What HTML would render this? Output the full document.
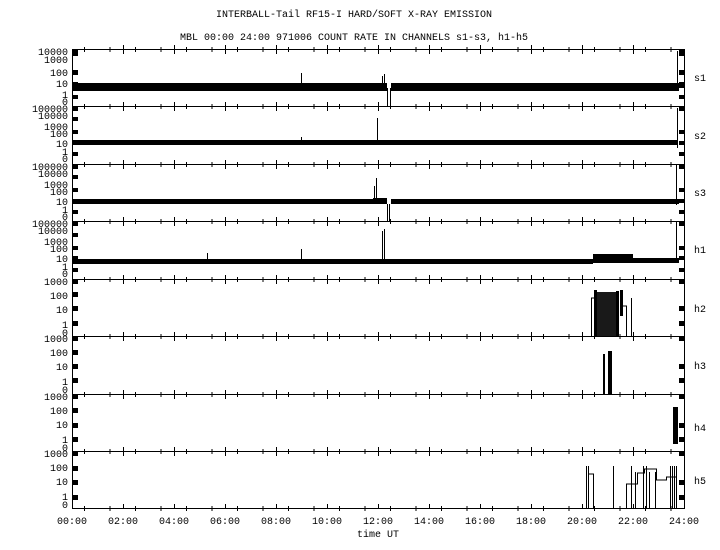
<!DOCTYPE html>
<html><head><meta charset="utf-8"><style>
html,body{margin:0;padding:0;background:#fff;}
svg{display:block;font-family:"Liberation Mono","DejaVu Sans Mono",monospace;font-size:10px;}
</style></head><body>
<svg width="720" height="550" viewBox="0 0 720 550" xmlns="http://www.w3.org/2000/svg">
<rect width="720" height="550" fill="#fff"/>
<text x="354" y="17" text-anchor="middle">INTERBALL-Tail RF15-I HARD/SOFT X-RAY EMISSION</text>
<text x="354" y="40" text-anchor="middle">MBL 00:00 24:00 971006  COUNT RATE IN CHANNELS s1-s3, h1-h5</text>
<g stroke="#000" fill="none" stroke-width="1">
<rect x="72.5" y="49.5" width="612" height="459"/>
<line x1="72" y1="106.5" x2="685" y2="106.5"/>
<line x1="72" y1="164.5" x2="685" y2="164.5"/>
<line x1="72" y1="221.5" x2="685" y2="221.5"/>
<line x1="72" y1="279.5" x2="685" y2="279.5"/>
<line x1="72" y1="336.5" x2="685" y2="336.5"/>
<line x1="72" y1="394.5" x2="685" y2="394.5"/>
<line x1="72" y1="451.5" x2="685" y2="451.5"/>
</g>
<g stroke="#000" stroke-width="1">
<path d="M123.5 45v9M174.5 45v9M225.5 45v9M276.5 45v9M327.5 45v9M378.5 45v9M429.5 45v9M480.5 45v9M531.5 45v9M582.5 45v9M633.5 45v9
M123.5 102v9M174.5 102v9M225.5 102v9M276.5 102v9M327.5 102v9M378.5 102v9M429.5 102v9M480.5 102v9M531.5 102v9M582.5 102v9M633.5 102v9
M123.5 160v9M174.5 160v9M225.5 160v9M276.5 160v9M327.5 160v9M378.5 160v9M429.5 160v9M480.5 160v9M531.5 160v9M582.5 160v9M633.5 160v9
M123.5 217v9M174.5 217v9M225.5 217v9M276.5 217v9M327.5 217v9M378.5 217v9M429.5 217v9M480.5 217v9M531.5 217v9M582.5 217v9M633.5 217v9
M123.5 275v9M174.5 275v9M225.5 275v9M276.5 275v9M327.5 275v9M378.5 275v9M429.5 275v9M480.5 275v9M531.5 275v9M582.5 275v9M633.5 275v9
M123.5 332v9M174.5 332v9M225.5 332v9M276.5 332v9M327.5 332v9M378.5 332v9M429.5 332v9M480.5 332v9M531.5 332v9M582.5 332v9M633.5 332v9
M123.5 390v9M174.5 390v9M225.5 390v9M276.5 390v9M327.5 390v9M378.5 390v9M429.5 390v9M480.5 390v9M531.5 390v9M582.5 390v9M633.5 390v9
M123.5 447v9M174.5 447v9M225.5 447v9M276.5 447v9M327.5 447v9M378.5 447v9M429.5 447v9M480.5 447v9M531.5 447v9M582.5 447v9M633.5 447v9
M123.5 504v5M174.5 504v5M225.5 504v5M276.5 504v5M327.5 504v5M378.5 504v5M429.5 504v5M480.5 504v5M531.5 504v5M582.5 504v5M633.5 504v5"/>
</g>
<g stroke="#000" stroke-dasharray="1 24.5">
<path d="M72 49.5h612M72 106.5h612M72 164.5h612M72 221.5h612M72 279.5h612M72 336.5h612M72 394.5h612M72 451.5h612M72 508.5h612" stroke-width="5" stroke-dashoffset="-12"/>
</g>
<g fill="#000">
<rect x="73" y="50" width="5" height="6"/><rect x="73" y="70" width="5" height="5"/><rect x="73" y="82" width="5" height="6"/><rect x="73" y="95" width="5" height="4"/>
<rect x="73" y="107" width="5" height="4"/><rect x="73" y="117" width="5" height="4"/><rect x="73" y="130" width="5" height="4"/><rect x="73" y="141" width="5" height="4"/><rect x="73" y="152" width="5" height="4"/>
<rect x="73" y="165" width="5" height="4"/><rect x="73" y="175" width="5" height="4"/><rect x="73" y="188" width="5" height="4"/><rect x="73" y="199" width="5" height="4"/><rect x="73" y="210" width="5" height="4"/>
<rect x="73" y="222" width="5" height="4"/><rect x="73" y="233" width="5" height="4"/><rect x="73" y="246" width="5" height="4"/><rect x="73" y="256" width="5" height="4"/><rect x="73" y="268" width="5" height="4"/>
<rect x="73" y="280" width="5" height="4"/><rect x="73" y="292" width="5" height="5"/><rect x="73" y="306" width="5" height="5"/><rect x="73" y="321" width="5" height="5"/>
<rect x="73" y="337" width="5" height="4"/><rect x="73" y="350" width="5" height="5"/><rect x="73" y="364" width="5" height="5"/><rect x="73" y="378" width="5" height="5"/>
<rect x="73" y="395" width="5" height="4"/><rect x="73" y="408" width="5" height="5"/><rect x="73" y="423" width="5" height="5"/><rect x="73" y="437" width="5" height="5"/>
<rect x="73" y="452" width="5" height="4"/><rect x="73" y="466" width="5" height="5"/><rect x="73" y="480" width="5" height="5"/><rect x="73" y="495" width="5" height="5"/>
<rect x="679" y="50" width="5" height="6"/><rect x="679" y="70" width="5" height="5"/><rect x="679" y="82" width="5" height="6"/><rect x="679" y="95" width="5" height="4"/>
<rect x="679" y="107" width="5" height="4"/><rect x="679" y="130" width="5" height="4"/><rect x="679" y="141" width="5" height="4"/><rect x="679" y="152" width="5" height="4"/>
<rect x="679" y="165" width="5" height="4"/><rect x="679" y="188" width="5" height="4"/><rect x="679" y="199" width="5" height="4"/><rect x="679" y="210" width="5" height="4"/>
<rect x="679" y="222" width="5" height="4"/><rect x="679" y="246" width="5" height="4"/><rect x="679" y="256" width="5" height="4"/><rect x="679" y="268" width="5" height="4"/>
<rect x="679" y="280" width="5" height="4"/><rect x="679" y="306" width="5" height="5"/><rect x="679" y="321" width="5" height="5"/>
<rect x="679" y="337" width="5" height="4"/><rect x="679" y="364" width="5" height="5"/><rect x="679" y="378" width="5" height="5"/>
<rect x="679" y="395" width="5" height="4"/><rect x="679" y="423" width="5" height="5"/><rect x="679" y="437" width="5" height="5"/>
<rect x="679" y="452" width="5" height="4"/><rect x="679" y="480" width="5" height="5"/><rect x="679" y="495" width="5" height="5"/>
<!-- data bands -->
<rect x="73" y="83" width="314" height="8"/><rect x="391" y="83" width="288" height="8"/>
<rect x="73" y="140" width="605" height="5"/>
<rect x="73" y="199" width="300" height="5"/><rect x="373" y="198" width="14" height="6"/><rect x="391" y="199" width="288" height="5"/>
<rect x="73" y="259" width="520" height="5"/><rect x="593" y="254" width="40" height="9"/><rect x="633" y="258" width="46" height="5"/>
<!-- h2 -->
<rect x="594" y="290" width="3" height="46"/><rect x="597" y="292" width="20" height="44" opacity="0.9"/><rect x="620" y="290" width="3" height="26"/>
<rect x="616" y="291" width="3" height="45"/>
<!-- h3 -->
<rect x="603" y="354" width="2" height="40"/><rect x="608" y="351" width="4" height="43"/>
<!-- h4 -->
<rect x="673" y="407" width="5" height="37"/>
</g>
<g stroke="#000" fill="none" stroke-width="1">
<path d="M301.5 73v12M382.5 76v10M384.5 74v12M387.5 88v18M390.5 88v18M301.5 137v5M377.5 118v24M389.5 204v17M387.5 204v17M374.5 186v12M376.5 178v20M382.5 231v28M384.5 229v30M301.5 249v10M207.5 253v6"/>
<path d="M591.5 336v-38h4M626.5 336v-30h-6M631.5 298v38M677.5 108v40M677.5 51v40M676.5 165v40M676.5 222v40"/>
<path d="M586.5 508v-42M588.5 508v-42v8h5v34M613.5 508v-42M631.5 508v-42M635.5 508v-36M643.5 508v-42M646.5 508v-42M649.5 508v-36M655.5 508v-36M626.5 508v-24h11v-11h7v-4h12v11h10v-3h10"/>
<path d="M670.5 466v42M672.5 466v42M674.5 466v42M676.5 466v42"/>
</g>
<g text-anchor="end">
<text x="68" y="55">10000</text><text x="68" y="63">1000</text><text x="68" y="76">100</text><text x="68" y="87">10</text><text x="68" y="98">1</text><text x="68" y="105">0</text>
<text x="68" y="112">100000</text><text x="68" y="119">10000</text><text x="68" y="130">1000</text><text x="68" y="137">100</text><text x="68" y="147">10</text><text x="68" y="155">1</text><text x="68" y="162">0</text>
<text x="68" y="170">100000</text><text x="68" y="177">10000</text><text x="68" y="188">1000</text><text x="68" y="195">100</text><text x="68" y="205">10</text><text x="68" y="213">1</text><text x="68" y="220">0</text>
<text x="68" y="227">100000</text><text x="68" y="234">10000</text><text x="68" y="245">1000</text><text x="68" y="252">100</text><text x="68" y="262">10</text><text x="68" y="270">1</text><text x="68" y="277">0</text>
<text x="68" y="285">1000</text><text x="68" y="299">100</text><text x="68" y="313">10</text><text x="68" y="328">1</text><text x="68" y="336">0</text>
<text x="68" y="342">1000</text><text x="68" y="356">100</text><text x="68" y="370">10</text><text x="68" y="385">1</text><text x="68" y="393">0</text>
<text x="68" y="400">1000</text><text x="68" y="414">100</text><text x="68" y="428">10</text><text x="68" y="443">1</text><text x="68" y="451">0</text>
<text x="68" y="457">1000</text><text x="68" y="471">100</text><text x="68" y="485">10</text><text x="68" y="500">1</text><text x="68" y="508">0</text>
</g>
<g>
<text x="694" y="81">s1</text><text x="694" y="139">s2</text><text x="694" y="196">s3</text><text x="694" y="253">h1</text>
<text x="694" y="312">h2</text><text x="694" y="369">h3</text><text x="694" y="431">h4</text><text x="694" y="484">h5</text>
</g>
<g text-anchor="middle">
<text x="72" y="524">00:00</text><text x="123" y="524">02:00</text><text x="174" y="524">04:00</text><text x="225" y="524">06:00</text><text x="276" y="524">08:00</text><text x="327" y="524">10:00</text><text x="378" y="524">12:00</text><text x="429" y="524">14:00</text><text x="480" y="524">16:00</text><text x="531" y="524">18:00</text><text x="582" y="524">20:00</text><text x="633" y="524">22:00</text><text x="684" y="524">24:00</text>
<text x="378" y="537">time UT</text>
</g>
</svg>
</body></html>
